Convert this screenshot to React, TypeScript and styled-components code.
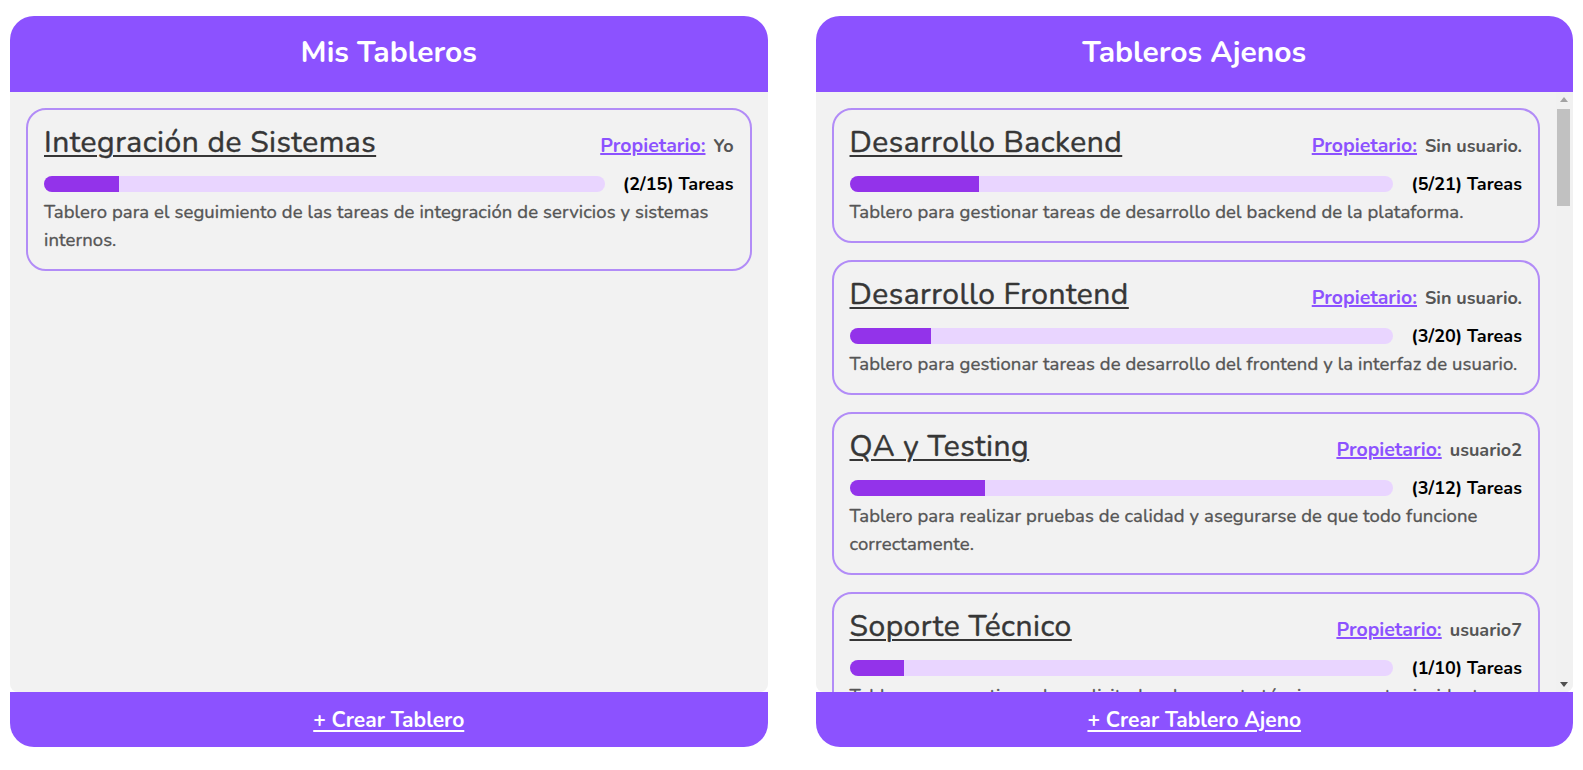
import React from "react";
import styled, { createGlobalStyle } from "styled-components";

const GlobalStyle = createGlobalStyle`
  html, body { margin: 0; padding: 0; background: #ffffff; }
  body { font-family: "Nunito", "Lato", "Noto Sans", sans-serif; }
  * { box-sizing: border-box; }
`;

const Page = styled.div`
  display: flex;
  justify-content: space-between;
  gap: 48px;
  padding: 16px 10px 0 10px;
`;

const Panel = styled.section`
  flex: 1 1 0;
  min-width: 0;
  height: 731px;
  display: flex;
  flex-direction: column;
`;

const PanelHeader = styled.header`
  height: 76px;
  flex: none;
  background: #8c52ff;
  border-radius: 24px 24px 0 0;
  display: flex;
  align-items: center;
  justify-content: center;
`;

const PanelTitle = styled.h2`
  margin: 0;
  color: #ffffff;
  font-size: 30px;
  font-weight: 700;
  line-height: 1;
  padding-bottom: 3px;
`;

const ListArea = styled.div`
  flex: 1 1 auto;
  min-height: 0;
  display: flex;
  background: #f2f2f2;
  border-radius: 0 0 8px 8px;
  overflow: hidden;
`;

const List = styled.div`
  flex: 1 1 auto;
  min-width: 0;
  overflow-y: auto;
  scrollbar-width: none;
  padding: 16px;
  display: flex;
  flex-direction: column;
  gap: 17px;
`;

const Rail = styled.div`
  flex: none;
  width: 17px;
  display: flex;
  flex-direction: column;
  background: #f1f1f1;
`;

const RailButton = styled.div`
  flex: none;
  height: 15px;
  display: flex;
  align-items: center;
  justify-content: center;
  padding-right: 2px;
`;

const RailTrack = styled.div`
  flex: 1 1 auto;
  padding: 2px 3px 0 1px;
`;

const Thumb = styled.div`
  height: 97px;
  background: #c1c1c1;
`;

const Card = styled.article`
  flex: none;
  border: 2px solid #b28cf7;
  border-radius: 20px;
  padding: 16px 16px 15px 16px;
`;

const CardTop = styled.div`
  display: flex;
  justify-content: space-between;
  align-items: baseline;
  margin-bottom: 16px;
`;

const CardTitle = styled.a`
  color: #363636;
  font-size: 30px;
  font-weight: 400;
  letter-spacing: 0.5px;
  -webkit-text-stroke: 0.45px #363636;
  line-height: 34px;
  text-decoration: underline;
  text-decoration-thickness: 2px;
  text-underline-offset: 3px;
  cursor: pointer;
`;

const Owner = styled.div`
  font-size: 18px;
  font-weight: 700;
  color: #555555;
  white-space: nowrap;
`;

const OwnerLabel = styled.a`
  font-size: 19.5px;
  color: #8c52ff;
  text-decoration: underline;
  text-decoration-thickness: 2px;
  margin-right: 8px;
  cursor: pointer;
`;

const ProgressRow = styled.div`
  display: flex;
  align-items: center;
  gap: 18px;
`;

const Track = styled.div`
  flex: 1 1 auto;
  height: 16px;
  border-radius: 8px;
  background: #e9d5ff;
  overflow: hidden;
`;

const Fill = styled.div`
  height: 100%;
  background: #9333ea;
`;

const Count = styled.span`
  font-size: 18px;
  font-weight: 700;
  color: #000000;
  line-height: 16px;
  white-space: nowrap;
`;

const Description = styled.p`
  margin: 6px 0 0 0;
  font-size: 18.5px;
  font-weight: 400;
  letter-spacing: 0.1px;
  -webkit-text-stroke: 0.35px #555555;
  color: #555555;
  line-height: 28px;
`;

const PanelFooter = styled.footer`
  height: 55px;
  flex: none;
  background: #8c52ff;
  border-radius: 0 0 24px 24px;
  display: flex;
  align-items: center;
  justify-content: center;
`;

const FooterLink = styled.a`
  color: #ffffff;
  font-size: 21px;
  font-weight: 700;
  text-decoration: underline;
  text-decoration-thickness: 2px;
  text-underline-offset: 3px;
  cursor: pointer;
`;

type Board = {
  title: string;
  owner: string;
  done: number;
  total: number;
  description: string;
};

const mine: Board[] = [
  {
    title: "Integración de Sistemas",
    owner: "Yo",
    done: 2,
    total: 15,
    description:
      "Tablero para el seguimiento de las tareas de integración de servicios y sistemas internos.",
  },
];

const others: Board[] = [
  {
    title: "Desarrollo Backend",
    owner: "Sin usuario.",
    done: 5,
    total: 21,
    description: "Tablero para gestionar tareas de desarrollo del backend de la plataforma.",
  },
  {
    title: "Desarrollo Frontend",
    owner: "Sin usuario.",
    done: 3,
    total: 20,
    description:
      "Tablero para gestionar tareas de desarrollo del frontend y la interfaz de usuario.",
  },
  {
    title: "QA y Testing",
    owner: "usuario2",
    done: 3,
    total: 12,
    description:
      "Tablero para realizar pruebas de calidad y asegurarse de que todo funcione correctamente.",
  },
  {
    title: "Soporte Técnico",
    owner: "usuario7",
    done: 1,
    total: 10,
    description:
      "Tablero para gestionar las solicitudes de soporte técnico y reportar incidentes.",
  },
  { title: "Diseño UX/UI", owner: "usuario3", done: 4, total: 14, description: "Tablero para el diseño de la experiencia de usuario y los prototipos de la interfaz." },
  { title: "Infraestructura", owner: "usuario4", done: 6, total: 18, description: "Tablero para administrar servidores, redes y servicios en la nube." },
  { title: "Base de Datos", owner: "usuario5", done: 2, total: 9, description: "Tablero para el modelado, migraciones y optimización de las bases de datos." },
  { title: "Seguridad", owner: "usuario6", done: 1, total: 11, description: "Tablero para auditorías de seguridad y corrección de vulnerabilidades." },
  { title: "DevOps", owner: "usuario8", done: 7, total: 16, description: "Tablero para automatizar despliegues e integración continua." },
  { title: "Documentación", owner: "usuario9", done: 3, total: 8, description: "Tablero para redactar y mantener la documentación técnica del proyecto." },
  { title: "Marketing Digital", owner: "usuario10", done: 5, total: 13, description: "Tablero para planificar campañas y contenidos en redes sociales." },
  { title: "Aplicación Móvil", owner: "usuario11", done: 4, total: 22, description: "Tablero para el desarrollo de la aplicación móvil para Android e iOS." },
  { title: "Recursos Humanos", owner: "usuario12", done: 2, total: 7, description: "Tablero para gestionar procesos de selección y capacitación del personal." },
  { title: "Análisis de Datos", owner: "usuario13", done: 3, total: 15, description: "Tablero para elaborar reportes e indicadores a partir de los datos del negocio." },
  { title: "Ventas", owner: "usuario14", done: 6, total: 12, description: "Tablero para el seguimiento de clientes potenciales y oportunidades de venta." },
  { title: "Atención al Cliente", owner: "usuario15", done: 8, total: 19, description: "Tablero para organizar las consultas y reclamos de los clientes." },
  { title: "Finanzas", owner: "usuario16", done: 1, total: 6, description: "Tablero para el control de presupuestos, pagos y facturación." },
  { title: "Investigación", owner: "usuario17", done: 2, total: 10, description: "Tablero para investigar nuevas tecnologías y herramientas." },
  { title: "Capacitación", owner: "usuario18", done: 3, total: 9, description: "Tablero para planificar cursos y talleres internos." },
  { title: "Logística", owner: "usuario19", done: 4, total: 17, description: "Tablero para coordinar envíos, inventario y proveedores." },
];

const BoardCard: React.FC<{ board: Board }> = ({ board }) => (
  <Card>
    <CardTop>
      <CardTitle>{board.title}</CardTitle>
      <Owner>
        <OwnerLabel>Propietario:</OwnerLabel>
        {board.owner}
      </Owner>
    </CardTop>
    <ProgressRow>
      <Track>
        <Fill style={{ width: `${(board.done / board.total) * 100}%` }} />
      </Track>
      <Count>
        ({board.done}/{board.total}) Tareas
      </Count>
    </ProgressRow>
    <Description>{board.description}</Description>
  </Card>
);

const ScrollRail: React.FC = () => (
  <Rail aria-hidden="true">
    <RailButton>
      <svg width="8" height="5" viewBox="0 0 8 5">
        <polygon points="0,5 8,5 4,0" fill="#a3a3a3" />
      </svg>
    </RailButton>
    <RailTrack>
      <Thumb />
    </RailTrack>
    <RailButton>
      <svg width="8" height="5" viewBox="0 0 8 5">
        <polygon points="0,0 8,0 4,5" fill="#505050" />
      </svg>
    </RailButton>
  </Rail>
);

const BoardPanel: React.FC<{
  title: string;
  action: string;
  boards: Board[];
  scrollable?: boolean;
}> = ({ title, action, boards, scrollable }) => (
  <Panel>
    <PanelHeader>
      <PanelTitle>{title}</PanelTitle>
    </PanelHeader>
    <ListArea>
      <List>
        {boards.map((b) => (
          <BoardCard key={b.title} board={b} />
        ))}
      </List>
      {scrollable && <ScrollRail />}
    </ListArea>
    <PanelFooter>
      <FooterLink>{action}</FooterLink>
    </PanelFooter>
  </Panel>
);

export default function App() {
  return (
    <>
      <GlobalStyle />
      <Page>
        <BoardPanel title="Mis Tableros" action="+ Crear Tablero" boards={mine} />
        <BoardPanel
          title="Tableros Ajenos"
          action="+ Crear Tablero Ajeno"
          boards={others}
          scrollable
        />
      </Page>
    </>
  );
}
